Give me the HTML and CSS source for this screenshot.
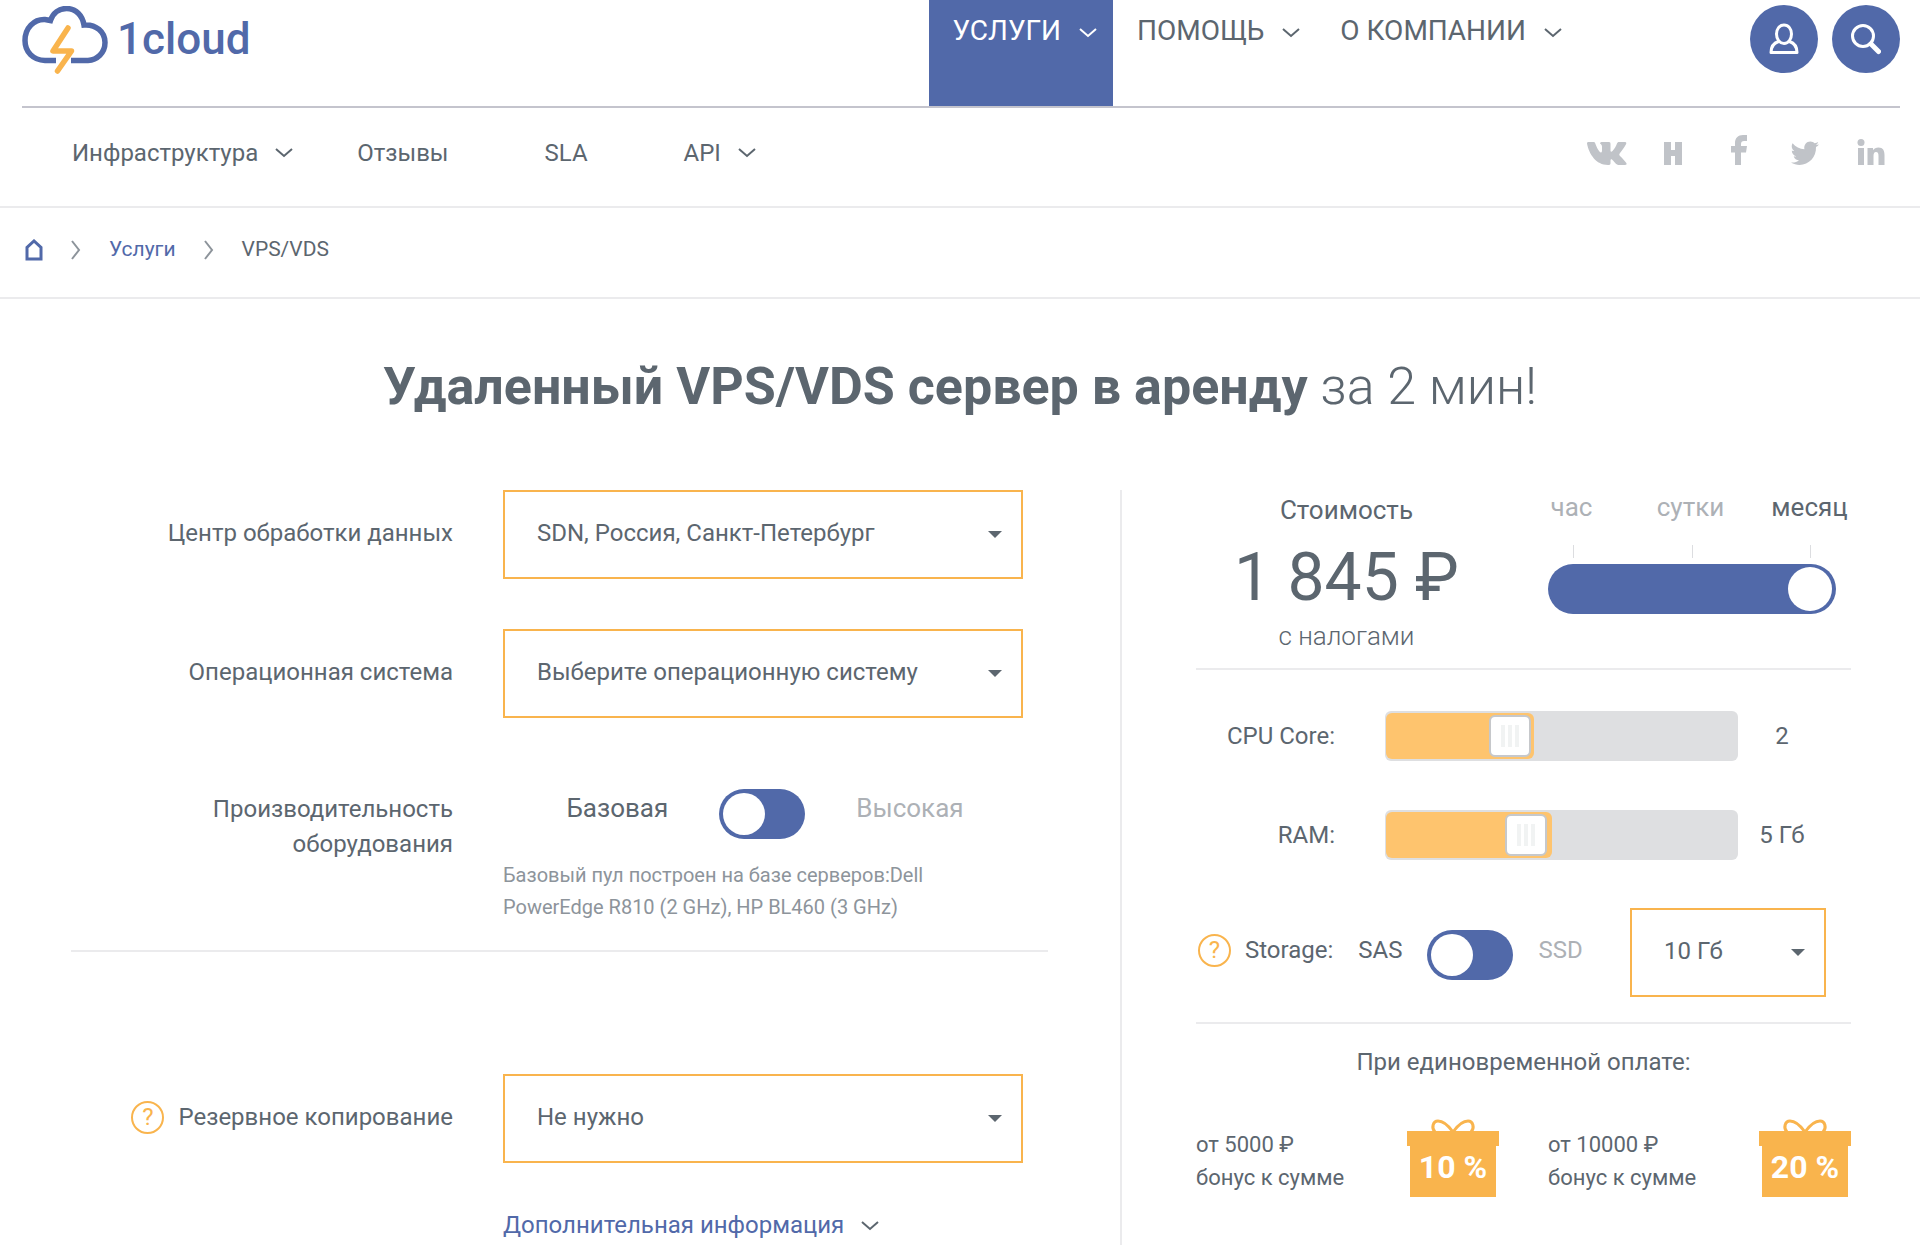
FILE: index.html
```html
<!DOCTYPE html>
<html lang="ru">
<head>
<meta charset="utf-8">
<meta name="viewport" content="width=device-width, initial-scale=1">
<title>Удаленный VPS/VDS сервер в аренду — 1cloud</title>
<link rel="stylesheet" href="styles.css">
</head>
<body>
<header class="header">
  <div class="topbar">
    <a class="logo" href="#" aria-label="1cloud">
      <svg class="logo-mark" viewBox="0 0 86 68" aria-hidden="true">
        <path d="M34 54.500H23C11 54 3 46 3 34.500 3 22 12 13 23 13.500L28.500 14.500C31 7 37 2.500 44.500 2.500 54 2.500 60.500 9.500 62 19 74 18 83 26 83 36.500 83 47 75 54 66 54.500H49" fill="none" stroke="#5169a9" stroke-width="5.500"/>
        <path d="M46 22L31 45H49.500L35.500 65" fill="none" stroke="#f9b44d" stroke-width="5.500" stroke-linecap="round" stroke-linejoin="round"/>
      </svg>
      <span class="logo-text">1cloud</span>
    </a>
    <nav class="main-nav">
      <a class="main-link active" href="#">УСЛУГИ <svg class="chev" viewBox="0 0 18 10"><path d="M1 1l8 7 8-7"/></svg></a>
      <a class="main-link" href="#">ПОМОЩЬ <svg class="chev" viewBox="0 0 18 10"><path d="M1 1l8 7 8-7"/></svg></a>
      <a class="main-link" href="#">О КОМПАНИИ <svg class="chev" viewBox="0 0 18 10"><path d="M1 1l8 7 8-7"/></svg></a>
    </nav>
    <div class="actions">
      <button class="round-btn" type="button" aria-label="Личный кабинет">
        <svg viewBox="0 0 30 32"><path d="M15 2c4.500 0 7.500 4 7.500 9s-3 9.500-7.500 9.500S7.500 16 7.500 11 10.500 2 15 2zM9.500 18.500C5 20 2 23.500 2 29.500h26c0-6-3-9.500-7.500-11"/></svg>
      </button>
      <button class="round-btn" type="button" aria-label="Поиск">
        <svg viewBox="0 0 30 32"><circle cx="12" cy="13" r="10.500"/><path d="M20 21l7.500 7.500" stroke-width="5" stroke-linecap="round"/></svg>
      </button>
    </div>
  </div>
  <div class="subbar">
    <nav class="sub-nav">
      <a class="sub-link" href="#">Инфраструктура <svg class="chev" viewBox="0 0 18 10"><path d="M1 1l8 7 8-7"/></svg></a>
      <a class="sub-link" href="#">Отзывы</a>
      <a class="sub-link" href="#">SLA</a>
      <a class="sub-link" href="#">API <svg class="chev" viewBox="0 0 18 10"><path d="M1 1l8 7 8-7"/></svg></a>
    </nav>
    <div class="social">
      <a href="#" aria-label="ВКонтакте"><svg width="40" height="30" viewBox="0 0 40 30"><path d="M0 8.500C0 7.500 .5 7 1.500 7H6.500C7.500 7 8 7.500 8.300 8.500 10 13 12 17 14 17.500 15 17.500 15 16 15 14.500V11.500C15 9.500 13 9 13 8.300 13.200 7.300 14 7 15.500 7H22C23.200 7 23.500 7.700 23.500 9V15.500C23.500 17 24.500 17 25.500 16 27.500 14 29 11 30 8.500 30.500 7.500 31 7 32 7H38C39.500 7 39.500 8 39 9.300 37.500 12.500 35 15.500 33 18 32 19.300 32 20 33 21 35.500 23.500 38 26 39.300 28 40 29.300 39.500 30 38 30H31.500C29 30 27 26 25 24.500 24 24 23.500 24.500 23.500 26V28C23.500 29.500 23 30 21 30 9 30 2 19 0 8.500Z"/></svg></a>
      <a href="#" aria-label="Хабр"><svg width="20" height="30" viewBox="0 0 20 30"><path d="M1 7h7v8h4V7h7v23h-7v-9H8v9H1z"/></svg></a>
      <a href="#" aria-label="Facebook"><svg width="18" height="30" viewBox="0 0 18 30"><path d="M5 30V17.500H1V11h4V8C5 3 8 0 13 0h4v6h-3c-2 0-3 1-3 3v2h6l-1 6.500h-5V30z"/></svg></a>
      <a href="#" aria-label="Twitter"><svg width="28" height="24" viewBox="0 0 28 24"><path d="M28 3.500a11 11 0 0 1-3 2.600C25.500 16 18 24 8.500 24 5.500 24 2.500 23 0 21.500c3 .4 6-.5 8-2.200-2.500 0-4.600-1.600-5.300-4 .9.200 1.700.1 2.500-.1C2.500 14.500.7 12 .8 9.400c.8.400 1.600.6 2.500.7C.8 8.300 0 5 1.600 2.300 4.500 5.900 8.800 8 13.400 8.200 12.500 4 15.500.5 19.400.5c1.700 0 3.200.7 4.200 1.800 1.400-.3 2.600-.8 3.600-1.400-.4 1.400-1.300 2.400-2.500 3.200 1.200-.1 2.300-.3 3.300-.6z"/></svg></a>
      <a href="#" aria-label="LinkedIn"><svg width="28" height="26" viewBox="0 0 28 26"><circle cx="4" cy="3.500" r="3.500"/><path d="M1 9h6v17H1zM10.500 9H16v2.300C17.200 9.500 19 8.500 21.500 8.500 26 8.500 27.500 11.500 27.500 16v10h-6v-9c0-2.500-.6-4-2.500-4-2 0-2.500 1.700-2.500 4v9h-6z"/></svg></a>
    </div>
  </div>
</header>

<nav class="crumbs" aria-label="Навигация">
  <a class="crumb-home" href="#" aria-label="Главная"><svg width="18" height="22" viewBox="0 0 18 22"><path d="M2 20V8.500L9 2l7 6.500V20z"/></svg></a>
  <svg class="crumb-sep" viewBox="0 0 10 20"><path d="M1 1l7 9-7 9"/></svg>
  <a class="crumb" href="#">Услуги</a>
  <svg class="crumb-sep" viewBox="0 0 10 20"><path d="M1 1l7 9-7 9"/></svg>
  <span class="crumb current">VPS/VDS</span>
</nav>

<main class="main">
  <h1 class="title"><strong>Удаленный VPS/VDS сервер в аренду</strong> за 2 мин!</h1>
  <form class="calc">
    <section class="config">
      <div class="row">
        <label class="label" for="dc">Центр обработки данных</label>
        <div class="select"><select id="dc"><option>SDN, Россия, Санкт-Петербург</option></select></div>
      </div>
      <div class="row">
        <label class="label" for="os">Операционная система</label>
        <div class="select"><select id="os"><option>Выберите операционную систему</option></select></div>
      </div>
      <div class="row row-perf">
        <label class="label" for="perf">Производительность оборудования</label>
        <div class="perf">
          <div class="perf-switch">
            <span class="perf-name">Базовая</span>
            <input class="switch" type="checkbox" role="switch" id="perf">
            <span class="perf-name off">Высокая</span>
          </div>
          <p class="note">Базовый пул построен на базе серверов:Dell<br>PowerEdge R810 (2 GHz), HP BL460 (3 GHz)</p>
        </div>
      </div>
      <hr class="rule">
      <div class="row row-backup">
        <div class="label help-label"><button class="help" type="button" aria-label="Подсказка">?</button><label for="backup">Резервное копирование</label></div>
        <div class="select"><select id="backup"><option>Не нужно</option></select></div>
      </div>
      <a class="more" href="#">Дополнительная информация <svg class="chev" viewBox="0 0 18 10"><path d="M1 1l8 7 8-7"/></svg></a>
    </section>

    <section class="summary">
      <div class="cost">
        <div class="price">
          <span class="price-title">Стоимость</span>
          <output class="price-value">1 845 ₽</output>
          <span class="price-tax">с налогами</span>
        </div>
        <div class="period">
          <div class="period-names"><span>час</span><span>сутки</span><span class="on">месяц</span></div>
          <div class="ticks"><i></i><i></i><i></i></div>
          <input class="period-range" type="range" min="0" max="2" value="2" aria-label="Период оплаты">
        </div>
      </div>
      <div class="sliders">
        <label class="slider-label" for="cpu">CPU Core:</label>
        <div class="slider"><span class="fill" style="width:42%"></span><input id="cpu" type="range" min="1" max="4" value="2"></div>
        <output class="slider-value" for="cpu">2</output>
        <label class="slider-label" for="ram">RAM:</label>
        <div class="slider"><span class="fill" style="width:47%"></span><input id="ram" type="range" min="0" max="13" value="5"></div>
        <output class="slider-value" for="ram">5 Гб</output>
      </div>
      <div class="storage">
        <button class="help" type="button" aria-label="Подсказка">?</button>
        <label class="storage-label" for="disk">Storage:</label>
        <span class="disk-name">SAS</span>
        <input class="switch" type="checkbox" role="switch" id="disk">
        <span class="disk-name off">SSD</span>
        <div class="select select-small"><select aria-label="Объем диска"><option>10 Гб</option></select></div>
      </div>
      <div class="bonus">
        <h2 class="bonus-title">При единовременной оплате:</h2>
        <div class="bonus-list">
          <div class="bonus-item">
            <p>от 5000 ₽<br>бонус к сумме</p>
            <div class="gift"><svg viewBox="0 0 92 78" aria-hidden="true"><path class="bow" d="M46 13C41 6 36 2 31 2S24 9 28 13M46 13C51 6 56 2 61 2S68 9 64 13"/><path d="M0 12h92v15h-3v51H3V27H0z"/></svg><b>10 %</b></div>
          </div>
          <div class="bonus-item">
            <p>от 10000 ₽<br>бонус к сумме</p>
            <div class="gift"><svg viewBox="0 0 92 78" aria-hidden="true"><path class="bow" d="M46 13C41 6 36 2 31 2S24 9 28 13M46 13C51 6 56 2 61 2S68 9 64 13"/><path d="M0 12h92v15h-3v51H3V27H0z"/></svg><b>20 %</b></div>
          </div>
        </div>
      </div>
    </section>
  </form>
</main>
</body>
</html>
```
FILE: styles.css
```css
:root {
  --blue: #5169a9;
  --orange: #f9b44d;
  --text: #5c666f;
  --muted: #adb1b6;
  --line: #ebebed;
}
* { box-sizing: border-box; }
body {
  margin: 0;
  min-height: 100vh;
  display: flex;
  flex-direction: column;
  font: 24px/35px Roboto, "Noto Sans", sans-serif;
  color: var(--text);
  background: #fff;
}
a { color: inherit; text-decoration: none; }
button, select, input { font: inherit; color: inherit; margin: 0; }
svg { display: block; flex: none; }
.chev { width: 18px; height: 10px; fill: none; stroke: currentColor; stroke-width: 2; }

/* Header */
.topbar {
  display: flex;
  margin: 0 20px 0 22px;
  height: 108px;
  border-bottom: 2px solid #c4c4cd;
}
.logo { display: flex; gap: 9px; padding-top: 6px; color: var(--blue); }
.logo-mark { width: 86px; height: 68px; }
.logo-text { font-size: 44px; line-height: 66px; font-weight: 500; }
.main-nav { display: flex; flex: 1; justify-content: flex-end; margin-right: 172px; }
.main-link { display: flex; gap: 18px; padding: 13px 16px 0 24px; font-size: 28px; line-height: 36px; }
.main-link .chev { margin-top: 15px; }
.main-link.active { background: var(--blue); color: #fff; }
.actions { display: flex; gap: 14px; padding-top: 5px; }
.round-btn {
  display: grid; place-items: center;
  width: 68px; height: 68px; padding: 0;
  border: 0; border-radius: 50%; background: var(--blue);
}
.round-btn svg { width: 30px; height: 32px; fill: none; stroke: #fff; stroke-width: 3; stroke-linejoin: round; }
.subbar {
  display: flex; align-items: center; justify-content: space-between;
  height: 100px; padding: 0 16px 8px 72px;
  border-bottom: 2px solid var(--line);
}
.sub-nav { display: flex; gap: 96px; }
.sub-nav .sub-link:first-child { margin-right: -32px; }
.sub-link { display: flex; align-items: center; gap: 17px; }
.social { display: grid; grid-template-columns: repeat(5, 66px); justify-items: center; align-items: end; margin-bottom: 7px; color: #c0c3c8; }
.social svg { fill: currentColor; }

/* Breadcrumbs */
.crumbs {
  display: flex; align-items: center; gap: 28px;
  height: 91px; padding: 0 25px 6px;
  border-bottom: 2px solid var(--line);
  font-size: 21px;
}
.crumbs svg { fill: none; stroke: var(--blue); stroke-width: 3; }
.crumbs .crumb-sep { width: 10px; height: 20px; stroke: #8d949b; stroke-width: 2; }
.crumb { color: var(--blue); }
.crumb.current { color: var(--text); }

/* Calculator */
.main { flex: 1; display: flex; flex-direction: column; }
.title { margin: 56px 0 71px; font-size: 52px; line-height: 64px; font-weight: 300; text-align: center; }
.title strong { font-weight: 700; }
.calc { flex: 1; display: grid; grid-template-columns: minmax(0, 1122fr) minmax(0, 798fr); }
.config { padding: 0 72px 0 71px; border-right: 2px solid var(--line); }
.row { display: grid; grid-template-columns: minmax(0, 382fr) minmax(0, 520fr) 25px; column-gap: 50px; align-items: center; margin-right: -50px; margin-bottom: 50px; }
.label { padding-bottom: 3px; text-align: right; }
.select { position: relative; }
.select select {
  display: block; width: 100%; height: 89px; padding: 0 60px 2px 32px;
  border: 2px solid var(--orange); border-radius: 0;
  background: #fff; appearance: none;
}
.select::after {
  content: ""; position: absolute; right: 21px; top: 41px;
  border: 7px solid transparent; border-top-color: var(--text); border-bottom: 0;
  pointer-events: none;
}
.row-perf { align-items: start; margin-bottom: 27px; padding-top: 24px; }
.row-perf .label { padding-left: 120px; }
.perf-switch { display: flex; align-items: center; height: 50px; justify-content: center; gap: 51px; margin-top: -3px; padding-left: 4px; font-size: 26px; }
.perf-name { padding-bottom: 12px; }
.off { color: var(--muted); }
.switch {
  appearance: none; width: 86px; height: 50px; padding: 4px;
  border-radius: 25px; background: var(--blue); flex: none;
}
.switch::before { content: ""; display: block; width: 42px; height: 42px; border-radius: 50%; background: #fff; }
.switch:checked::before { margin-left: auto; }
.note { margin: 20px 0 0; font-size: 20px; line-height: 32px; color: #8d949b; }
.rule { height: 2px; margin: 0; border: 0; background: var(--line); }
.row-backup { margin-top: 122px; margin-bottom: 45px; }
.help-label { display: flex; justify-content: flex-end; align-items: center; gap: 14px; }
.help {
  width: 33px; height: 33px; padding: 0; flex: none;
  border: 2px solid var(--orange); border-radius: 50%; background: none;
  color: var(--orange); line-height: 29px; text-align: center;
}
.more { display: flex; align-items: center; gap: 17px; margin-left: 432px; color: var(--blue); }
.more .chev { color: var(--text); }

/* Price and resources */
.summary { padding: 0 69px 0 74px; }
.cost { display: flex; justify-content: space-between; height: 180px; padding: 0 15px 0 38px; border-bottom: 2px solid var(--line); }
.price { display: flex; flex-direction: column; align-items: center; text-align: center; }
.price-title { font-size: 26px; line-height: 40px; }
.price-value { font-size: 66px; line-height: 96px; white-space: nowrap; }
.price-tax { font-size: 26px; line-height: 20px; font-weight: 300; }
.period { width: 288px; }
.period-names { display: grid; grid-template-columns: repeat(3, 119px); margin: 0 -36px; font-size: 26px; text-align: center; color: var(--muted); }
.period-names .on { color: var(--text); }
.ticks { display: flex; justify-content: space-between; margin: 20px 25px 6px; }
.ticks i { width: 1px; height: 13px; background: #dcdde0; }
.period-range { appearance: none; display: block; width: 100%; height: 50px; padding: 0 4px; border-radius: 25px; background: var(--blue); }
.period-range::-webkit-slider-thumb { appearance: none; width: 44px; height: 44px; border-radius: 50%; background: #fff; }
.sliders { display: grid; grid-template-columns: 189px minmax(0, 1fr) 88px; grid-auto-rows: 50px; row-gap: 49px; align-items: center; padding: 41px 25px 48px 0; }
.slider-label { padding-right: 50px; text-align: right; }
.slider { position: relative; height: 50px; border-radius: 6px; background: #dedfe1; }
.fill { position: absolute; left: 1px; top: 2px; bottom: 2px; border-radius: 6px; background: #fec46e; }
.slider input { position: relative; appearance: none; display: block; width: 100%; height: 50px; background: none; }
.slider input::-webkit-slider-thumb {
  appearance: none; width: 42px; height: 42px;
  border: 2px solid #c6c8cb; border-radius: 6px;
  background:
    linear-gradient(90deg, #f1f3f3 4px, transparent 4px 7px, #f1f3f3 7px 11px, transparent 11px 14px, #f1f3f3 14px) center / 18px 22px no-repeat,
    #fff;
}
.slider-value { text-align: center; }
.storage { display: flex; align-items: center; height: 89px; gap: 25px; padding-left: 2px; margin-right: 25px; }
.storage .help { margin: 0 -11px 4px 0; }
.storage-label, .disk-name { padding-bottom: 4px; }
.storage .switch { margin-top: 4px; }
.storage .select { flex: 0 0 196px; margin-left: auto; }
.bonus { margin-top: 25px; padding-top: 21px; border-top: 2px solid var(--line); }
.bonus-title { margin: 0 0 39px; font: inherit; text-align: center; }
.bonus-list { display: grid; grid-template-columns: 1fr 1fr; column-gap: 49px; }
.bonus-item { display: flex; justify-content: space-between; align-items: flex-start; font-size: 22px; line-height: 33px; }
.bonus-item p { margin: 9px 0 0; white-space: nowrap; }
.gift { display: grid; width: 92px; height: 78px; flex: none; }
.gift > * { grid-area: 1 / 1; }
.gift svg { fill: var(--orange); }
.gift .bow { fill: none; stroke: var(--orange); stroke-width: 3; }
.gift b { position: relative; align-self: end; padding-bottom: 13px; text-align: center; font-size: 32px; line-height: 34px; color: #fff; white-space: nowrap; }
```
